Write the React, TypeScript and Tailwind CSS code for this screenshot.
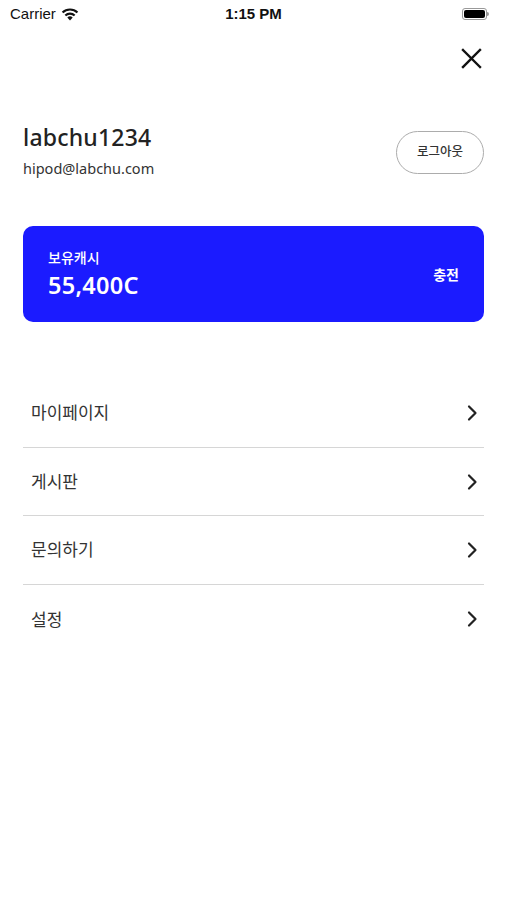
import React from 'react';

const menus = ['마이페이지', '게시판', '문의하기', '설정'];

const Chevron = () => (
    <svg width="12" height="18" viewBox="0 0 12 18" fill="none">
        <path d="M3 2.5 L9.5 9 L3 15.5" stroke="#222" strokeWidth="2.2" strokeLinecap="round" strokeLinejoin="round" />
    </svg>
);

export default function App() {
    return (
        <div
            className="w-[507px] h-[900px] bg-white text-[#222] overflow-hidden"
            style={{ fontFamily: '"Noto Sans", "Noto Sans CJK KR", sans-serif' }}
        >
            {/* Status bar */}
            <div className="h-[28px] flex items-center justify-between px-[10px]">
                <div className="flex items-center gap-[5px] w-[120px]">
                    <span className="text-[15px] text-[#111]" style={{ fontFamily: '"Liberation Sans", sans-serif' }}>Carrier</span>
                    <svg width="18" height="14" viewBox="0 0 18 14">
                        <path d="M9 13.5 L6.3 10.6 A4 4 0 0 1 11.7 10.6 Z" fill="#111" />
                        <path d="M3.6 7.7 A7.8 7.8 0 0 1 14.4 7.7 L12.9 9.3 A5.6 5.6 0 0 0 5.1 9.3 Z" fill="#111" />
                        <path d="M0.8 4.7 A11.8 11.8 0 0 1 17.2 4.7 L15.7 6.3 A9.6 9.6 0 0 0 2.3 6.3 Z" fill="#111" />
                    </svg>
                </div>
                <span className="text-[15px] font-bold text-[#111]" style={{ fontFamily: '"Liberation Sans", sans-serif' }}>1:15 PM</span>
                <div className="w-[120px] flex justify-end pr-[8px]">
                    <div className="flex items-center">
                        <div className="w-[25px] h-[12px] rounded-[3px] border border-[#999] p-[1px]">
                            <div className="w-full h-full rounded-[2px] bg-black" />
                        </div>
                        <div className="w-[2px] h-[4px] rounded-r-sm bg-[#999]" />
                    </div>
                </div>
            </div>

            {/* Close */}
            <div className="flex justify-end pr-[25px] mt-[20px]">
                <svg width="21" height="21" viewBox="0 0 21 21">
                    <path d="M2 2 L19 19 M19 2 L2 19" stroke="#111" strokeWidth="2.4" strokeLinecap="square" />
                </svg>
            </div>

            {/* Profile */}
            <div className="flex items-center justify-between px-[23px] mt-[53px]">
                <div className="flex flex-col">
                    <span className="text-[23px] leading-[30px] font-medium text-[#222] tracking-[0.2px]">labchu1234</span>
                    <span className="text-[14.5px] leading-[20px] mt-[6px] text-[#333]">hipod@labchu.com</span>
                </div>
                <button className="w-[88px] h-[43px] rounded-full border-[1.5px] border-[#acacac] text-[12.5px] font-medium text-[#333] mt-[4px]">
                    로그아웃
                </button>
            </div>

            {/* Cash card */}
            <div className="mx-[23px] mt-[48px] h-[96px] rounded-[10px] bg-[#1b1bff] flex items-center justify-between px-[25px] text-white">
                <div className="flex flex-col">
                    <span className="text-[14px] leading-[20px] font-medium">보유캐시</span>
                    <span className="text-[23.5px] leading-[30px] font-semibold mt-[2px] tracking-[0.3px]">55,400C</span>
                </div>
                <span className="text-[14px] font-bold">충전</span>
            </div>

            {/* Menu */}
            <div className="mx-[23px] mt-[57px]">
                {menus.map((m, i) => (
                    <div
                        key={m}
                        className={`h-[68.7px] flex items-center justify-between pl-[8px] pr-[6px] ${i < menus.length - 1 ? 'border-b border-[#d6d6d6]' : ''}`}
                    >
                        <span className="text-[17px] text-[#333]">{m}</span>
                        <Chevron />
                    </div>
                ))}
            </div>
        </div>
    );
}
